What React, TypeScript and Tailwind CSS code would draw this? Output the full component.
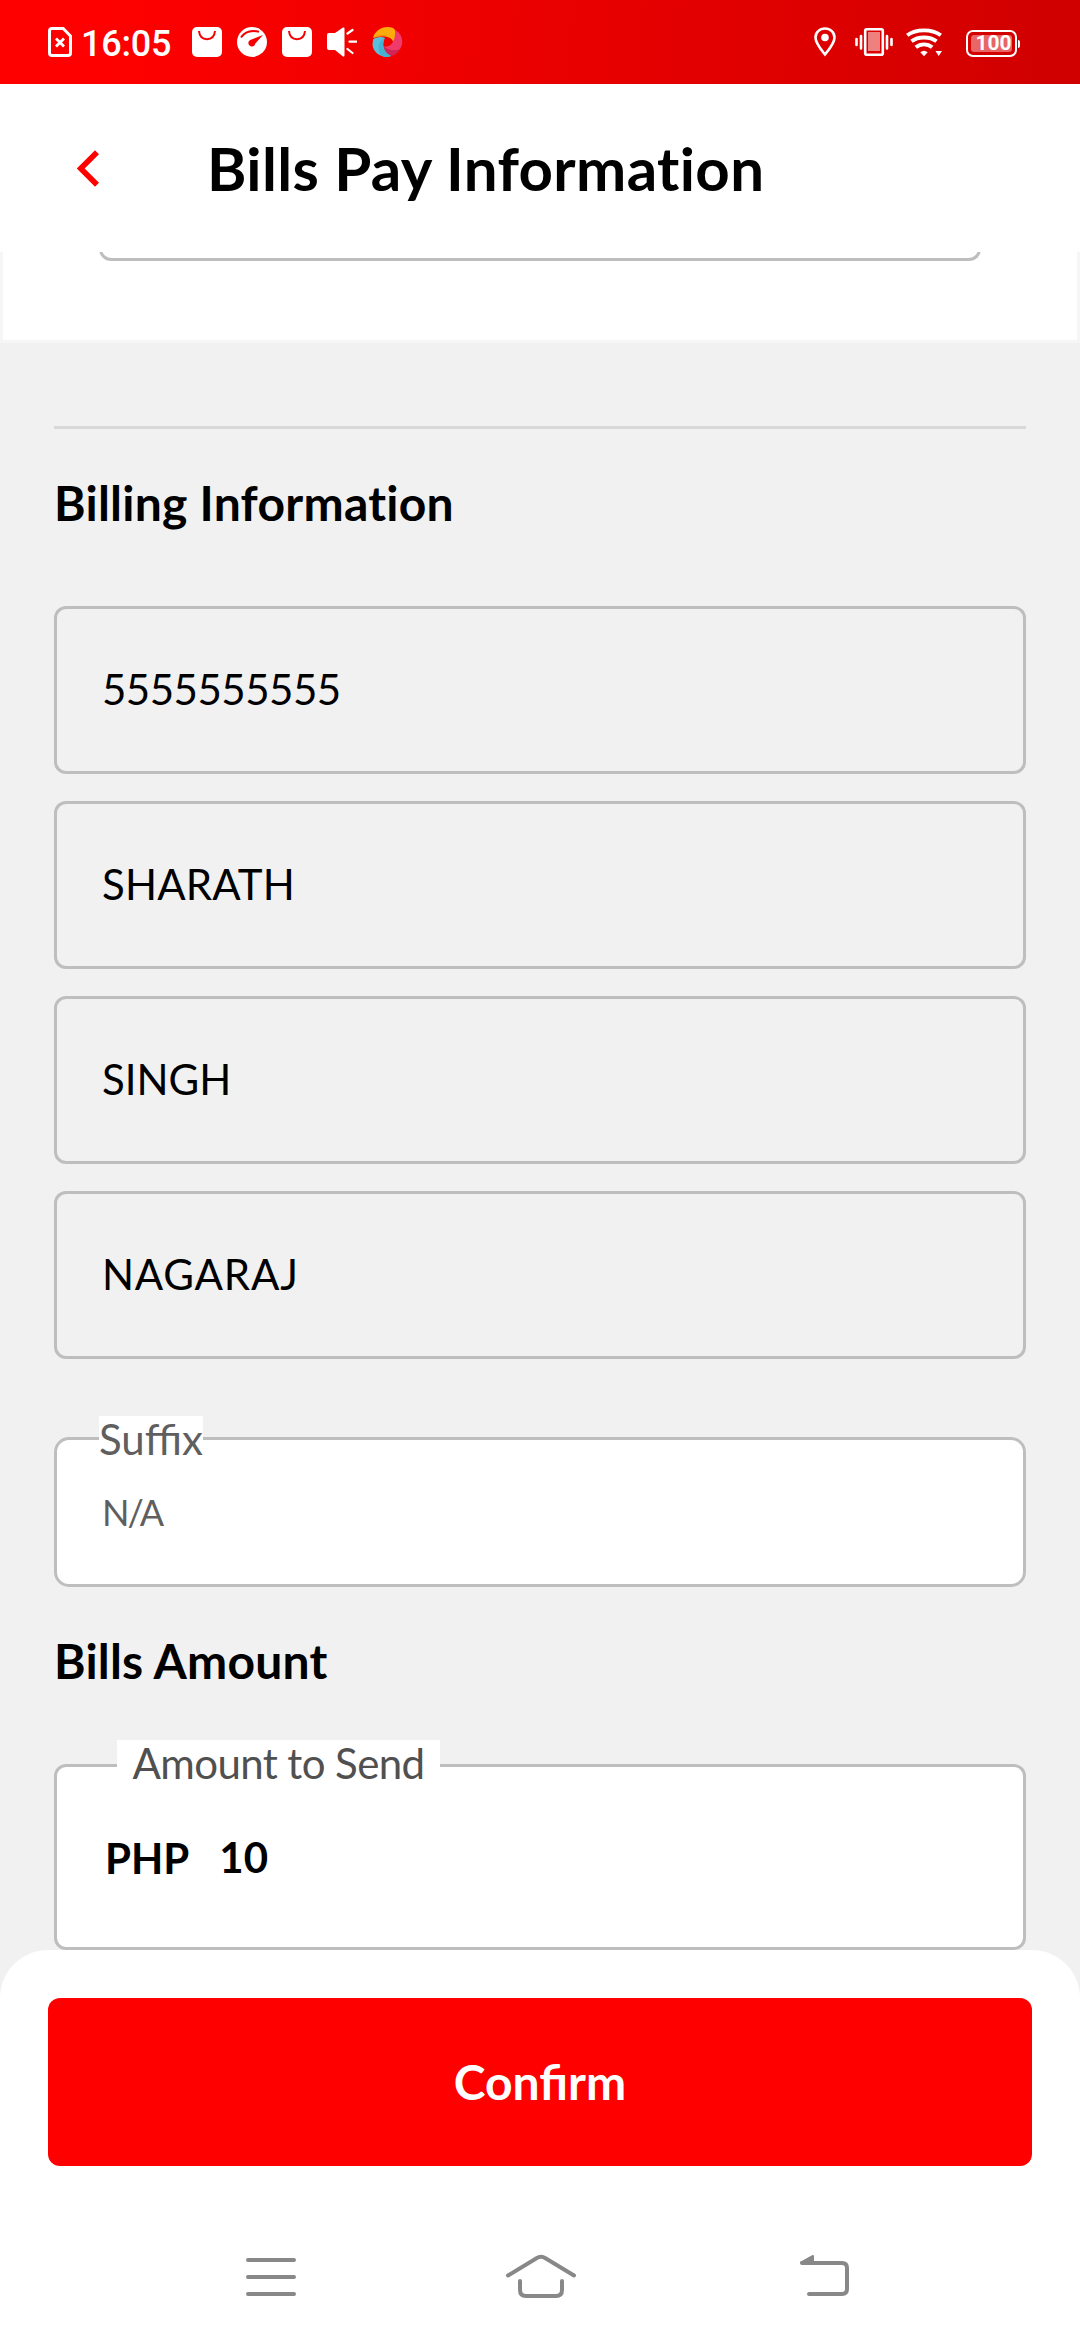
import type { ReactNode } from "react";

function SimIcon() {
  return (
    <svg width="24" height="30" viewBox="0 0 24 30" fill="none" stroke="#fff">
      <path d="M4 1.5H15.2L22.5 9V26Q22.5 28.5 20 28.5H4Q1.5 28.5 1.5 26V4Q1.5 1.5 4 1.5Z" strokeWidth="3" />
      <path d="M8 11.5L16 19.5M16 11.5L8 19.5" strokeWidth="2.8" />
    </svg>
  );
}

function BagIcon() {
  return (
    <svg width="30" height="30" viewBox="0 0 30 30">
      <rect width="30" height="30" rx="5" fill="#fff" />
      <path d="M7 4C7.5 9.5 10.500 12.200 15 12.200S22.500 9.500 23 4" fill="none" stroke="#f50000" strokeWidth="2" />
    </svg>
  );
}

function GaugeIcon() {
  return (
    <svg width="30" height="30" viewBox="0 0 30 30">
      <circle cx="15" cy="15" r="15" fill="#fff" />
      <path d="M4 10.500C8 4.500 14 2.800 22 4.800" fill="none" stroke="#f30000" strokeWidth="2" />
      <path d="M26 8L18.300 16.500A3.500 3.500 0 1 1 13.200 12.900Z" fill="#f30000" />
    </svg>
  );
}

function SpeakerIcon() {
  return (
    <svg width="30" height="30" viewBox="0 0 30 30">
      <path d="M2 6H8L16 0.500Q17.500 0 17.500 1.500V28.500Q17.500 30 16 29.500L8 23H2Q0 23 0 21V8Q0 6 2 6Z" fill="#fff" />
      <path d="M20.500 6.500L25.500 3M22.500 14.700H29.500M20.500 22L25.500 26" stroke="#fff" strokeWidth="2.200" strokeLinecap="round" />
    </svg>
  );
}

function PinwheelIcon() {
  return (
    <svg width="31" height="30" viewBox="0 0 31 30">
      <path d="M1 11C3 3 12-2 21 1C24.500 3 25 8 21.500 15C19 9 11 7 1 11Z" fill="#fdac0c" />
      <path d="M1 11C8 6 17 7 21.500 15C19.500 10 12 8 1 11Z" fill="#f68b10" />
      <path d="M23 3C30 6 32.500 16 28 22C25 27 17 25 11.500 19C18 20.500 24 15 23 3Z" fill="#ef3b6c" />
      <path d="M28 22C25 28 20 30 17 28C12 26 10.500 22 11.500 19C17 24 23 24 28 22Z" fill="#d42455" />
      <path d="M1 12.500C5 9.500 10 9.500 13 11C9.500 17 11 25 19 29C12 32 1.500 27 0.500 18Z" fill="#5bbfdc" />
      <path d="M13 11C7 13 5 20 8 27C12 31 16 30 19 29C11 25 9.500 17 13 11Z" fill="#43b2d2" />
      <path d="M13 11.500C15 10 19 11 20.500 14.500C20 18 16 20.500 11.800 19Z" fill="#f20000" />
    </svg>
  );
}

function PinIcon() {
  return (
    <svg width="22" height="30" viewBox="0 0 22 30">
      <path d="M11 1.500C5.500 1.500 1.500 5.500 1.500 10.500C1.500 16.500 7.500 23 11 27.500C14.500 23 20.500 16.500 20.500 10.500C20.500 5.500 16.500 1.500 11 1.500Z" fill="none" stroke="#fff" strokeWidth="2.600" />
      <circle cx="11" cy="10.500" r="3.800" fill="#fff" />
    </svg>
  );
}

function VibrateIcon() {
  return (
    <svg width="38" height="30" viewBox="0 0 38 30">
      <rect x="10.200" y="2.200" width="17.600" height="25.600" rx="1.500" fill="none" stroke="#fff" strokeWidth="2.600" />
      <rect x="13" y="5" width="12" height="19" fill="#ee8080" />
      <path d="M1.500 12V18M6 9V21.500M32 9V21.500M36.500 12V18" stroke="#fff" strokeWidth="2.600" strokeLinecap="round" />
    </svg>
  );
}

function WifiIcon() {
  return (
    <svg width="36" height="30" viewBox="0 0 36 30">
      <g fill="none" stroke="#fff" strokeWidth="3.800">
        <path d="M1.200 8.300C10 1.800 26 1.800 34.800 8.300" />
        <path d="M5.500 14.300C12 9.200 24 9.200 30.500 14.300" />
        <path d="M9.800 20.300C14.500 16.300 21.500 16.300 26.200 20.300" />
      </g>
      <path d="M14.300 25.300Q18 22 21.700 25.300L18 29.300Z" fill="#fff" />
      <path d="M29.500 24H36L32.700 29Z" fill="#fff" />
    </svg>
  );
}

function Battery() {
  return (
    <div className="flex items-center">
      <div className="h-[27px] w-[51px] rounded-[7px] border-2 border-white p-[3px]">
        <div className="flex h-full items-center justify-center rounded-[3px] bg-[#e86666] pl-1 text-[21px] leading-none font-bold text-white font-['Roboto',sans-serif]">
          100
        </div>
      </div>
      <div className="ml-px h-2 w-0.5 rounded-r bg-white" />
    </div>
  );
}

function StatusBar() {
  return (
    <div className="flex h-[84px] items-center bg-[linear-gradient(94deg,#ff0000_8%,#f00000_38%,#df0000_72%,#cf0000_100%)] pl-12">
      <SimIcon />
      <span className="ml-[9px] w-[95px] pt-[3px] text-[36px] leading-[42px] font-medium tracking-[-0.2px] text-white font-['Roboto',sans-serif]">16:05</span>
      <div className="ml-4 flex gap-[15px]">
        <BagIcon />
        <GaugeIcon />
        <BagIcon />
        <SpeakerIcon />
        <PinwheelIcon />
      </div>
      <div className="mr-[60px] ml-auto flex items-center">
        <PinIcon />
        <span className="ml-[19px]"><VibrateIcon /></span>
        <span className="ml-[13px]"><WifiIcon /></span>
        <span className="mt-[3px] ml-6"><Battery /></span>
      </div>
    </div>
  );
}

function Header() {
  return (
    <header className="flex h-[168px] shrink-0 items-center bg-white">
      <svg className="ml-[77px]" width="22" height="37" viewBox="0 0 22 37" fill="none">
        <path d="M20 2.200L3.700 18.500L20 34.800" stroke="#ff0000" strokeWidth="5.600" />
      </svg>
      <h1 className="ml-[108px] text-[60px] leading-[72px] font-bold tracking-[0.360px] [font-variant-ligatures:none]">Bills Pay Information</h1>
    </header>
  );
}

function Field({ children }: { children: ReactNode }) {
  return (
    <div className="flex h-[168px] items-center rounded-[12px] border-3 border-[#bebebe] pb-0.5 pl-[45px] text-[42px] leading-[50px]">
      {children}
    </div>
  );
}

function NavBar() {
  return (
    <nav className="flex flex-1 items-start pt-[87px] pl-[245px]">
      <svg width="52" height="46" viewBox="0 0 52 46" stroke="#888" strokeWidth="4" strokeLinecap="round">
        <path d="M3 7H49M3 24H49M3 41H49" />
      </svg>
      <svg width="72" height="46" viewBox="0 0 72 46" fill="none" stroke="#888" strokeWidth="4" strokeLinecap="round" className="ml-[208px]">
        <path d="M3 22.500L31.500 5.200Q36 2.500 40.500 5.200L69 22.500" />
        <path d="M15 28V37Q15 43 21 43H51Q57 43 57 37V28" />
      </svg>
      <svg width="54" height="46" viewBox="0 0 54 46" fill="none" className="ml-[221px]">
        <path d="M4 10H44Q49 10 49 15V36Q49 41 44 41H11" stroke="#888" strokeWidth="4" strokeLinecap="round" />
        <path d="M2 9L14 2.200Q16 1.500 16 3V11H3Z" fill="#888" />
      </svg>
    </nav>
  );
}

export default function App() {
  return (
    <div className="flex h-[2340px] w-[1080px] flex-col overflow-hidden bg-[#f1f1f1] text-black font-['Lato',sans-serif]">
      <StatusBar />
      <Header />

      <section className="h-[91px] border-x-[3px] border-b-[3px] border-[#f6f6f6] bg-white px-24">
        <div className="flex h-[9px] flex-col justify-end overflow-hidden">
          <div className="h-[30px] shrink-0 rounded-b-[12px] border-3 border-t-0 border-[#bebebe]" />
        </div>
      </section>

      <main className="flex flex-col px-[54px] pt-[83px]">
        <hr className="border-t-3 border-[#d8d8d8]" />
        <h2 className="mt-[45px] text-[48px] leading-[58px] font-bold tracking-[0.260px] [font-variant-ligatures:none]">Billing Information</h2>
        <div className="mt-[74px] flex flex-col gap-[27px]">
          <Field><span className="tracking-[-0.5px]">5555555555</span></Field>
          <Field><span className="tracking-[0.150px]">SHARATH</span></Field>
          <Field>SINGH</Field>
          <Field><span className="tracking-[0.800px]">NAGARAJ</span></Field>
        </div>

        <div className="relative mt-[78px] flex h-[150px] items-center rounded-[15px] border-3 border-[#bebebe] bg-white pl-[45px] text-[36px] text-[#5f5f5f]">
          <span className="absolute -top-6 left-[42px] h-[46px] w-[104px] bg-white text-[42px] leading-[46px]">Suffix</span>
          <span className="tracking-[-2px]">N/A</span>
        </div>

        <h2 className="mt-[45px] text-[48px] leading-[58px] font-bold tracking-[0.200px]">Bills Amount</h2>

        <div className="relative mt-[74px] flex h-[186px] items-center rounded-[12px] border-3 border-[#bebebe] bg-white pt-0.5 pl-[48px] text-[42px] leading-[50px] font-bold">
          <span className="absolute -top-[27px] left-[60px] h-[46px] w-[323px] bg-white text-center leading-[46px] font-normal tracking-[-0.600px] text-[#505050]">
            Amount to Send
          </span>
          <span>PHP</span>
          <span className="ml-[30px] pb-0.5">10</span>
        </div>
      </main>

      <footer className="relative flex flex-1 flex-col rounded-t-[48px] bg-white pt-12">
        <button className="mx-12 h-[168px] rounded-[12px] bg-[#ff0000] text-[48px] leading-[58px] font-bold text-white">Confirm</button>
        <NavBar />
      </footer>
    </div>
  );
}
